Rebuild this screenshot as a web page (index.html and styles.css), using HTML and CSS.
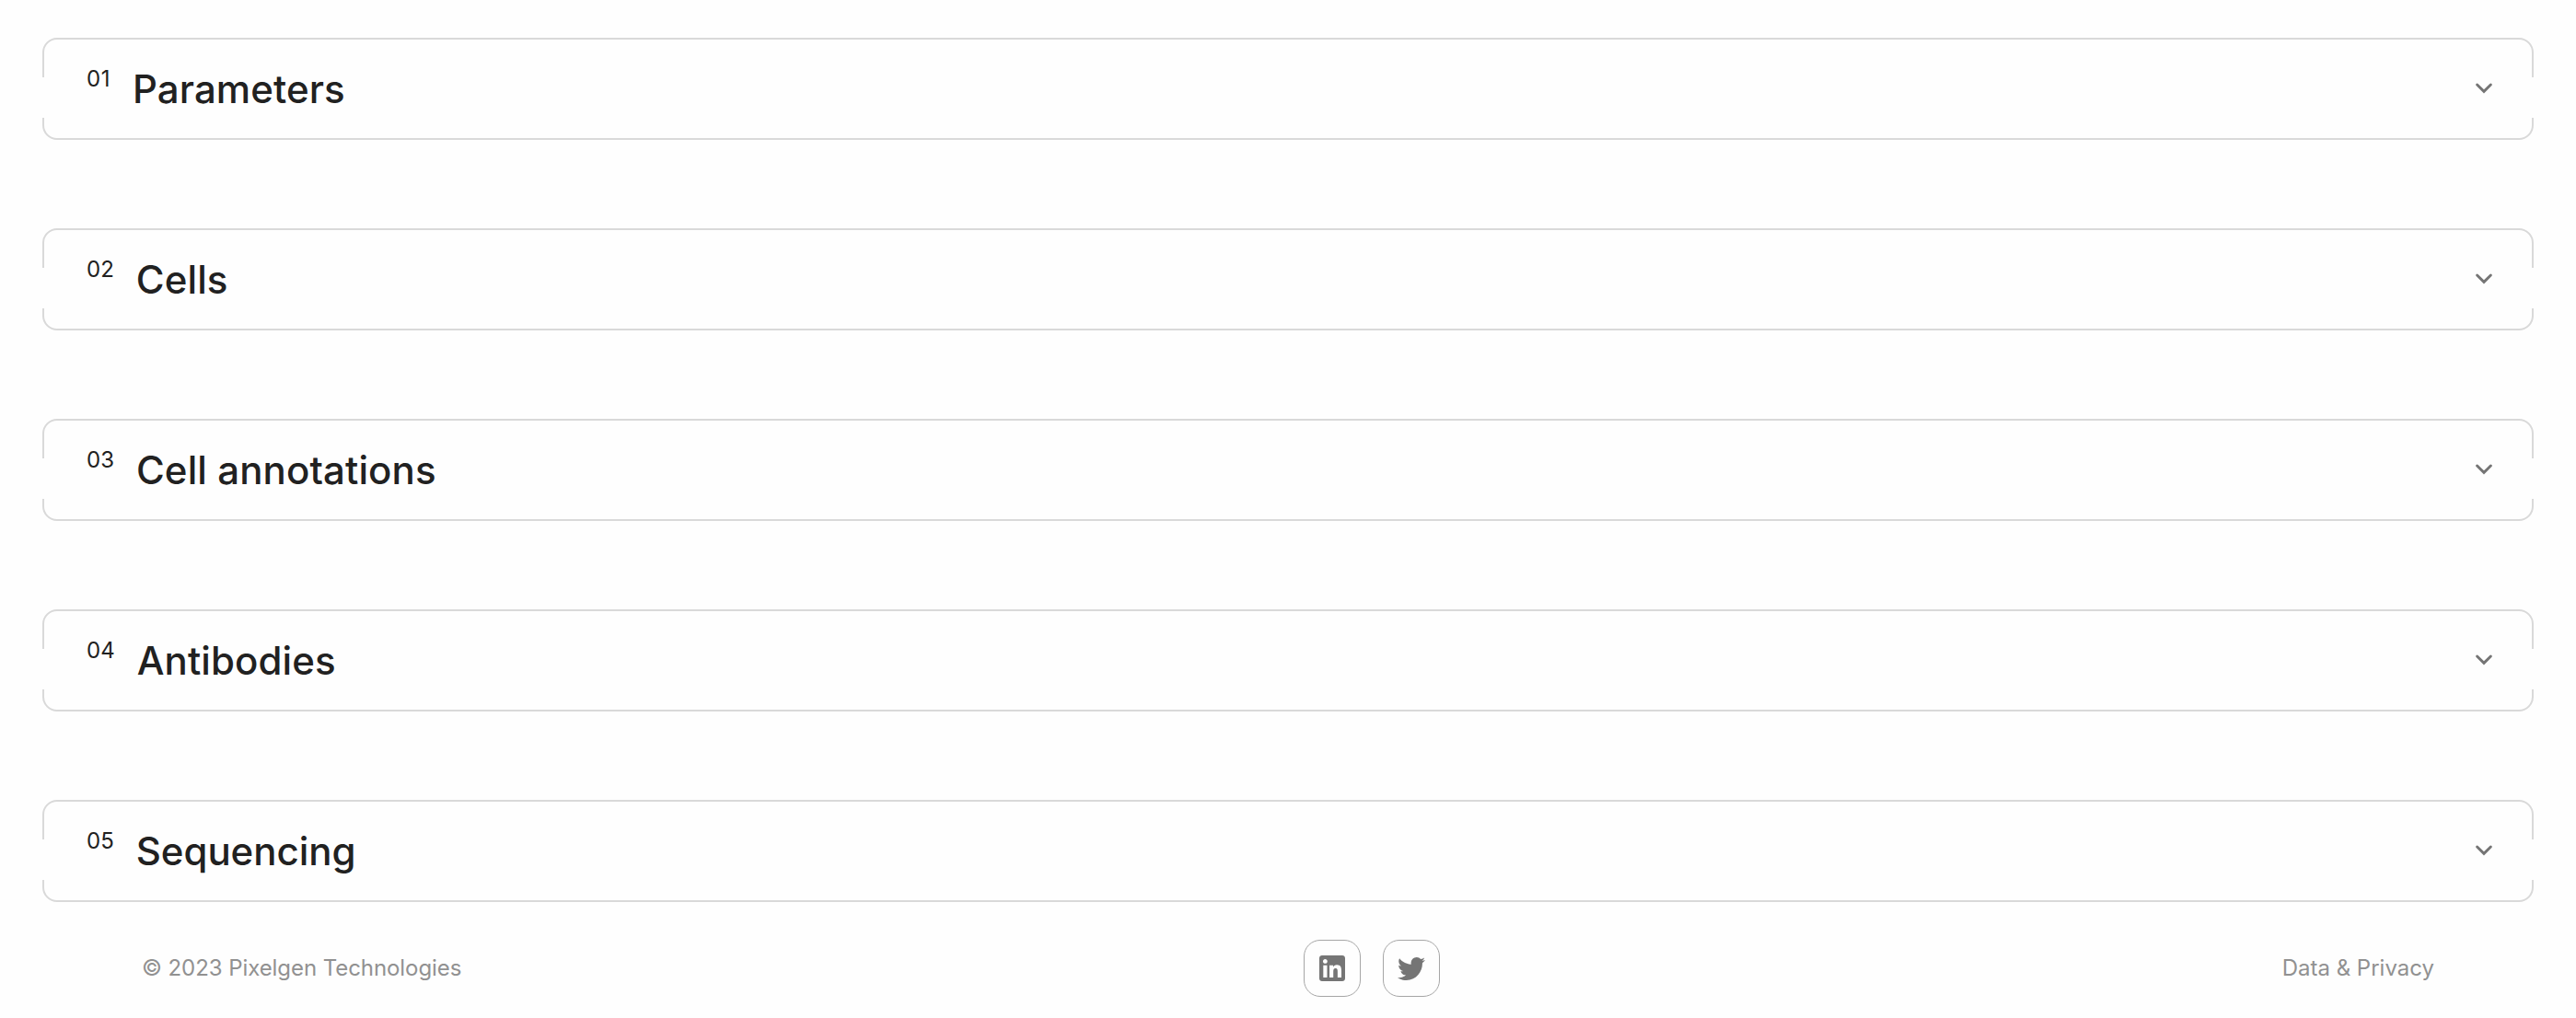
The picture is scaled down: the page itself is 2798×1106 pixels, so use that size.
FILE: index.html
```html
<!DOCTYPE html>
<html lang="en">
<head>
<meta charset="utf-8">
<title>Pixelgen report</title>
<link rel="stylesheet" href="styles.css">
</head>
<body>
<main class="sections">
  <section class="card"><h2 class="heading"><span class="num num-first">01</span><span class="title">Parameters</span></h2><svg class="chevron" viewBox="0 0 20 14"><path d="M2.6 3l7.4 7.4L17.4 3"/></svg></section>
  <section class="card"><h2 class="heading"><span class="num">02</span><span class="title">Cells</span></h2><svg class="chevron" viewBox="0 0 20 14"><path d="M2.6 3l7.4 7.4L17.4 3"/></svg></section>
  <section class="card"><h2 class="heading"><span class="num">03</span><span class="title">Cell annotations</span></h2><svg class="chevron" viewBox="0 0 20 14"><path d="M2.6 3l7.4 7.4L17.4 3"/></svg></section>
  <section class="card"><h2 class="heading"><span class="num">04</span><span class="title">Antibodies</span></h2><svg class="chevron" viewBox="0 0 20 14"><path d="M2.6 3l7.4 7.4L17.4 3"/></svg></section>
  <section class="card"><h2 class="heading"><span class="num">05</span><span class="title title-tight">Sequencing</span></h2><svg class="chevron" viewBox="0 0 20 14"><path d="M2.6 3l7.4 7.4L17.4 3"/></svg></section>
</main>
<footer class="footer">
  <span class="copyright">© 2023 Pixelgen Technologies</span>
  <nav class="social">
    <a class="social-link" aria-label="LinkedIn"><svg class="linkedin" viewBox="0 0 448 448"><path d="M400 0H48C21 0 0 21 0 48v352c0 27 21 48 48 48h352c27 0 48-21 48-48V48c0-27-21-48-48-48zM135.400 384H69V170.200h66.500V384zm-33.200-243c-21.300 0-38.500-17.300-38.500-38.500S80.900 64 102.200 64c21.200 0 38.500 17.300 38.500 38.500 0 21.300-17.200 38.500-38.500 38.500zm282.100 243h-66.400V280c0-24.800-.5-56.700-34.500-56.700-34.600 0-39.900 27-39.900 54.900V384h-66.400V170.200h63.700v29.200h.9c8.900-16.800 30.600-34.500 62.900-34.500 67.200 0 79.700 44.300 79.700 101.900V384z"/></svg></a>
    <a class="social-link" aria-label="Twitter"><svg class="twitter" viewBox="0 48 512 416" preserveAspectRatio="none"><path d="M459.370 151.716c.325 4.548.325 9.097.325 13.645 0 138.720-105.583 298.558-298.558 298.558-59.452 0-114.680-17.219-161.137-47.106 8.447.974 16.568 1.299 25.340 1.299 49.055 0 94.213-16.568 130.274-44.832-46.132-.975-84.792-31.188-98.112-72.772 6.498.974 12.995 1.624 19.818 1.624 9.421 0 18.843-1.300 27.614-3.573-48.081-9.747-84.143-51.980-84.143-102.985v-1.299c13.969 7.797 30.214 12.670 47.431 13.319-28.264-18.843-46.781-51.005-46.781-87.391 0-19.492 5.197-37.360 14.294-52.954 51.655 63.675 129.300 105.258 216.365 109.807-1.624-7.797-2.599-15.918-2.599-24.040 0-57.828 46.782-104.934 104.934-104.934 30.213 0 57.502 12.670 76.670 33.137 23.715-4.548 46.456-13.320 66.599-25.340-7.798 24.366-24.366 44.833-46.132 57.827 21.117-2.273 41.584-8.122 60.426-16.243-14.292 20.791-32.161 39.308-52.628 54.253z"/></svg></a>
  </nav>
  <a class="privacy">Data &amp; Privacy</a>
</footer>
</body>
</html>
```
FILE: styles.css
```css
* { box-sizing: border-box; }
body {
  margin: 0;
  background: #fefefe;
  color: #212121;
  font-family: Inter, "Liberation Sans", sans-serif;
}
.sections {
  display: flex;
  flex-direction: column;
  gap: 96px;
  padding: 41px 46px 0;
}
.card {
  position: relative;
  display: flex;
  align-items: center;
  justify-content: space-between;
  height: 111px;
  padding: 0 42px 0 46px;
  border: 2px solid #d9d9d9;
  border-radius: 16px;
}
/* breaks in the left and right borders */
.card::before, .card::after {
  content: "";
  position: absolute;
  top: 41px;
  width: 2px;
  height: 44px;
  background: #fefefe;
}
.card::before { left: -2px; }
.card::after { right: -2px; }
.heading {
  display: flex;
  align-items: flex-start;
  gap: 24px;
  margin: 0;
  font-weight: 500;
  font-size: 42px;
  line-height: 51px;
}
.title { letter-spacing: 0.1px; }
.title-tight { letter-spacing: -0.04px; }
.num {
  font-size: 24px;
  font-weight: 400;
  line-height: 29px;
}
.num-first { letter-spacing: 0.5px; }
.chevron {
  width: 20px;
  height: 14px;
  margin-bottom: 2px;
  fill: none;
  stroke: #757575;
  stroke-width: 2.9;
  stroke-linecap: round;
}
.footer {
  display: flex;
  align-items: center;
  justify-content: space-between;
  padding: 41px 154px 0;
  font-size: 24px;
  line-height: 29px;
  color: #919191;
}
.copyright, .privacy { padding-bottom: 1px; }
.privacy { display: block; }
.copyright { letter-spacing: -0.07px; }
.social { display: flex; gap: 24px; }
.social-link {
  display: flex;
  align-items: center;
  justify-content: center;
  width: 62px;
  height: 62px;
  border: 1px solid #a6a6a6;
  border-radius: 18px;
  fill: #757575;
}
.linkedin { width: 28px; height: 28px; }
.twitter { width: 30px; height: 25px; margin-top: 1px; }
```
